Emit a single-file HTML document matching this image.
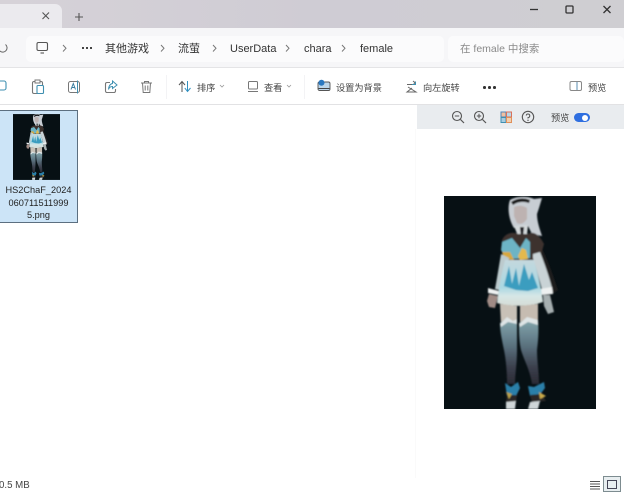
<!DOCTYPE html>
<html><head><meta charset="utf-8"><style>
html,body{margin:0;padding:0}
body{width:624px;height:492px;overflow:hidden;background:#fff}
#w{width:624px;height:492px;position:relative;overflow:hidden;background:#fff;font-family:"Liberation Sans","Noto Sans CJK SC",sans-serif;color:#333;filter:blur(.35px)}
.a{position:absolute;white-space:nowrap}
svg{position:absolute;overflow:visible}
.t{font-size:9.2px;line-height:14px;color:#444}
.b{font-size:11px;line-height:14px;color:#333}
</style></head><body><div id="w">
<svg width="0" height="0" style="position:absolute"><defs>
<linearGradient id="leg" x1="0" y1="0" x2="0" y2="1"><stop offset="0" stop-color="#86aab0"/><stop offset=".4" stop-color="#5c7481"/><stop offset=".75" stop-color="#3b3f4c"/><stop offset="1" stop-color="#2a2a34"/></linearGradient>
<linearGradient id="skirt" x1="0" y1="0" x2="0" y2="1"><stop offset="0" stop-color="#c4d8de"/><stop offset=".6" stop-color="#a9d8e2"/><stop offset=".78" stop-color="#d6e6e6"/><stop offset="1" stop-color="#d5dcd6"/></linearGradient>
<filter id="bl" x="-10%" y="-10%" width="120%" height="120%"><feGaussianBlur stdDeviation=".8"/></filter>
<symbol id="fig" viewBox="0 0 152 213">
<rect width="152" height="213" fill="#071014"/>
<g filter="url(#bl)">
<path d="M90 40 C100 52 108 76 114 94 L108 98 C100 76 92 58 86 48Z" fill="#1c1b1c"/>
<path d="M66 4 C72 0 84 0 90 3 L98 2 L95 12 L93 18 C93 26 96 34 98 40 L88 38 L84 30 L70 32 C65 24 63 12 66 4Z" fill="#c8cdd3"/>
<path d="M67 6 Q76 0 86 4 L85 7 Q76 4 69 9Z" fill="#141519"/>
<path d="M70 11 Q77 8 83 12 L83 23 Q78 30 73 27 L70 20Z" fill="#bdb2b1"/>
<path d="M70 30 L84 29 L83 39 L74 40Z" fill="#d3d8da"/><path d="M76 31 L80 31 L79 42 L77 42Z" fill="#16191e"/>
<path d="M58 44 C62 36 70 36 74 38 L84 38 C90 34 96 40 100 48 L96 62 L86 66 L62 64 L57 54Z" fill="#3d332f"/>
<path d="M58 46 L68 42 L76 52 L82 42 L86 46 L86 62 L62 63 L57 54Z" fill="#6db4c5"/>
<path d="M58 56 L66 56 L70 64 L60 63Z" fill="#d7a83d"/><path d="M78 52 L74 60 L76 64 L84 63 L82 54Z" fill="#e3b94e"/>
<path d="M89 58 L96 56 C100 66 105 80 108 92 L98 94 C95 82 92 72 89 62Z" fill="#c9d3d6"/>
<path d="M57 58 C55 70 53 82 51 93 L59 95 C62 86 64 74 65 62Z" fill="#bccacd"/>
<path d="M44 92 L55 95 L54 99 L44 97Z" fill="#eef1f1"/><path d="M96 93 L108 91 L109 98 L97 99Z" fill="#eef1f1"/>
<path d="M45 98 L54 100 L51 112 L45 111 L43 105Z" fill="#a08b85"/>
<path d="M99 99 L106 99 L110 116 L104 118 L100 110Z" fill="#a6afb0"/>
<path d="M61 64 L90 64 C94 78 98 96 99 106 C86 111 66 111 53 107 C55 90 58 76 61 64Z" fill="url(#skirt)"/>
<path d="M60 90 L65 70 L68 88 L72 72 L75 90 L80 68 L85 84 L88 76 L94 92 L84 95 L72 94Z" fill="#3b9dbf"/>
<path d="M56 108 L73 110 L73 128 L57 128Z" fill="#c8c1b7"/>
<path d="M76 110 L94 108 L94 130 L76 128Z" fill="#c6bcb1"/>
<path d="M56 127 L63 122 L69 125 L73 124 L73 154 C73 168 71 178 71 188 L63 188 C63 176 62 164 60 154 C58 144 56 136 56 127Z" fill="url(#leg)"/>
<path d="M75 127 L83 122 L94 124 C95 136 94 146 93 154 C93 166 95 176 95 188 L88 188 C86 174 80 164 77 154 C75 144 75 136 75 127Z" fill="url(#leg)"/>
<path d="M56 128 L63 121 L69 125 L73 123 L73 128 L64 126 L57 131Z" fill="#dfe5e6"/><path d="M75 128 L83 121 L94 124 L94 129 L84 126 L76 131Z" fill="#dfe5e6"/>
<path d="M61 187 L67 191 L74 186 L76 192 L72 200 L63 200Z" fill="#2b7fa8"/>
<path d="M84 190 L90 191 L100 186 L101 192 L95 200 L86 200Z" fill="#2b7fa8"/>
<path d="M63 199 L73 199 L72 206 L62 206Z" fill="#2c2825"/><path d="M86 199 L97 198 L102 205 L88 206Z" fill="#2c2825"/>
<path d="M62 196 L68 198 L65 203Z" fill="#b9a04c"/><path d="M95 196 L102 200 L96 203Z" fill="#c9a94a"/>
<path d="M62 206 L72 205 L71 213 L62 213Z" fill="#cfd6d8"/><path d="M86 206 L96 205 L94 213 L84 213Z" fill="#cfd6d8"/>
</g>
</symbol>
</defs></svg>

<!-- title bar -->
<div class="a" style="left:0;top:0;width:624px;height:28px;background:linear-gradient(90deg,#d6d2d8,#cfccd4 50%,#cfced2)"></div>
<div class="a" style="left:0;top:4px;width:62px;height:24px;background:#ebeaee;border-radius:0 7px 0 0"></div>
<svg style="left:41px;top:11px" width="10" height="10"><path d="M1.500 1.500L8 8M8 1.500L1.500 8" stroke="#555" stroke-width="1.100" fill="none"/></svg>
<svg style="left:74px;top:12px" width="10" height="10"><path d="M5 1V9M1 5H9" stroke="#555" stroke-width="1.100" fill="none"/></svg>
<svg style="left:530px;top:4px" width="90" height="16"><path d="M0 5.500H8" stroke="#333" stroke-width="1.300"/><rect x="36" y="2" width="7" height="7" rx="1" fill="none" stroke="#333" stroke-width="1.300"/><path d="M73.500 2L80.500 9M80.500 2L73.500 9" stroke="#333" stroke-width="1.300"/></svg>

<!-- address bar -->
<div class="a" style="left:0;top:28px;width:624px;height:40px;background:#f6f6f8"></div>
<div class="a" style="left:26px;top:36px;width:418px;height:26px;background:#fbfbfc;border-radius:5px"></div>
<div class="a" style="left:448px;top:36px;width:176px;height:26px;background:#fbfbfc;border-radius:5px"></div>
<svg style="left:0;top:41px" width="12" height="14"><path d="M7 2.500A4.300 4.300 0 1 1 1 3" transform="translate(-1.500 1)" stroke="#666" stroke-width="1" fill="none"/></svg>
<svg style="left:36px;top:41px" width="14" height="14"><rect x="1" y="1.500" width="10.500" height="8" rx="1.500" fill="none" stroke="#555" stroke-width="1.100"/><path d="M4.500 12H8" stroke="#555" stroke-width="1.100"/></svg>
<svg style="left:62px;top:44px" width="6" height="9"><path d="M1 1L4 4.300L1 7.500" stroke="#777" fill="none"/></svg>
<div class="a" style="left:82px;top:47px;width:2px;height:2px;background:#444;box-shadow:4px 0 #444,8px 0 #444"></div>
<div class="a b" style="left:105px;top:42px">其他游戏</div>
<svg style="left:160px;top:44px" width="6" height="9"><path d="M1 1L4 4.300L1 7.500" stroke="#777" fill="none"/></svg>
<div class="a b" style="left:178px;top:42px">流萤</div>
<svg style="left:212px;top:44px" width="6" height="9"><path d="M1 1L4 4.300L1 7.500" stroke="#777" fill="none"/></svg>
<div class="a b" style="left:230px;top:42px">UserData</div>
<svg style="left:285px;top:44px" width="6" height="9"><path d="M1 1L4 4.300L1 7.500" stroke="#777" fill="none"/></svg>
<div class="a b" style="left:304px;top:42px">chara</div>
<svg style="left:341px;top:44px" width="6" height="9"><path d="M1 1L4 4.300L1 7.500" stroke="#777" fill="none"/></svg>
<div class="a b" style="left:360px;top:42px">female</div>
<div class="a b" style="left:460px;top:42px;color:#8a8a8a;font-size:10.500px">在 female 中搜索</div>

<!-- toolbar -->
<div class="a" style="left:0;top:67px;width:624px;height:38px;background:#fff;border-top:1px solid #e4e4e6;border-bottom:1px solid #e2e2e4;box-sizing:border-box"></div>
<svg style="left:0;top:79px" width="8" height="15"><rect x="-3" y="2" width="9" height="9" rx="2" fill="none" stroke="#3f8fb0" stroke-width="1.100"/></svg>
<svg style="left:31px;top:79px" width="16" height="16"><rect x="1.500" y="2.500" width="10" height="12" rx="1.500" fill="none" stroke="#777" stroke-width="1.100"/><rect x="4" y="1" width="5" height="3" fill="#fff" stroke="#777"/><rect x="6" y="6.500" width="6.500" height="8" rx="1" fill="#fff" stroke="#3f8fb0" stroke-width="1.100"/></svg>
<svg style="left:67px;top:79px" width="16" height="16"><rect x="1.500" y="2.500" width="11" height="11" rx="2" fill="none" stroke="#777"/><path d="M4 10.500L6.300 4.500L8.500 10.500M5 8.500H7.600" stroke="#3a7ea0" fill="none"/><path d="M10.500 1.500V14.500" stroke="#3f8fb0"/></svg>
<svg style="left:104px;top:80px" width="15" height="14"><path d="M6 2.500H3A1.500 1.500 0 0 0 1.500 4V11A1.500 1.500 0 0 0 3 12.500H10A1.500 1.500 0 0 0 11.500 11V9" fill="none" stroke="#777" stroke-width="1.100"/><path d="M8.500 1L13 5L8.500 8.500V6.500C6.500 6.500 5 7.500 4.500 9.500C4.500 6.500 6 4 8.500 3.500Z" fill="none" stroke="#3f8fb0"/></svg>
<svg style="left:140px;top:80px" width="13" height="14"><path d="M1 3H12M4.500 3V1.500H8.500V3M2.500 3L3.200 12.500H9.800L10.500 3M5.200 5.500V10.500M7.800 5.500V10.500" fill="none" stroke="#777" stroke-width="1"/></svg>
<div class="a" style="left:166px;top:75px;width:1px;height:24px;background:#f3f3f5"></div>
<svg style="left:178px;top:80px" width="14" height="13"><path d="M4 12V2M1 5L4 1.500L7 5" fill="none" stroke="#555"/><path d="M9.500 1V11M6.800 8L9.500 11.500L12.500 8" fill="none" stroke="#2f8fc0"/></svg>
<div class="a t" style="left:197px;top:81px">排序</div>
<svg style="left:219px;top:84px" width="6" height="5"><path d="M1 1L3 3L5 1" stroke="#999" fill="none" stroke-width=".8"/></svg>
<svg style="left:247px;top:80px" width="12" height="13"><rect x="1.500" y="1.500" width="9" height="7.500" rx="1" fill="none" stroke="#777"/><path d="M1 11.500H11" stroke="#777"/></svg>
<div class="a t" style="left:264px;top:81px">查看</div>
<svg style="left:286px;top:84px" width="6" height="5"><path d="M1 1L3 3L5 1" stroke="#999" fill="none" stroke-width=".8"/></svg>
<div class="a" style="left:304px;top:75px;width:1px;height:24px;background:#f3f3f5"></div>
<svg style="left:317px;top:79px" width="14" height="14"><rect x="1" y="3" width="12" height="8.500" rx="1.500" fill="#bcd6ea" stroke="#555" stroke-width=".9"/><circle cx="4.500" cy="3.800" r="3" fill="#2a78c0"/><path d="M1.500 9.500H12.500" stroke="#444"/></svg>
<div class="a t" style="left:336px;top:81px">设置为背景</div>
<svg style="left:405px;top:80px" width="13" height="14"><path d="M2 4.500H8.500L10 2.500M8 1L10.200 2.800M3 7L11 12H2L7 8" fill="none" stroke="#666"/><path d="M7 4.500H10.500V1.500" fill="none" stroke="#3f8fb0"/></svg>
<div class="a t" style="left:423px;top:81px">向左旋转</div>
<div class="a" style="left:483px;top:86px;width:2.500px;height:2.500px;border-radius:50%;background:#333;box-shadow:5px 0 #333,10px 0 #333"></div>
<svg style="left:569px;top:80px" width="14" height="13"><rect x="1" y="1.500" width="11.500" height="9" rx="1.500" fill="none" stroke="#888"/><path d="M8 2V10" stroke="#5a8cb0"/></svg>
<div class="a t" style="left:588px;top:81px">预览</div>

<!-- preview toolbar -->
<div class="a" style="left:417px;top:105px;width:207px;height:24px;background:#e9ecef"></div>
<div class="a" style="left:415px;top:129px;width:1px;height:349px;background:#fafafa"></div>
<svg style="left:451px;top:110px" width="14" height="14"><circle cx="6" cy="6" r="4.500" fill="none" stroke="#555" stroke-width="1.100"/><path d="M9.500 9.500L13 13" stroke="#555" stroke-width="1.200"/><path d="M3.800 6H8.200" stroke="#555"/></svg>
<svg style="left:473px;top:110px" width="14" height="14"><circle cx="6" cy="6" r="4.500" fill="none" stroke="#555" stroke-width="1.100"/><path d="M9.500 9.500L13 13" stroke="#555" stroke-width="1.200"/><path d="M3.800 6H8.200M6 3.800V8.200" stroke="#555"/></svg>
<svg style="left:500px;top:111px" width="13" height="13"><rect x="1" y="1" width="5" height="5" fill="#f0c0a0" stroke="#4f86b8"/><rect x="6.500" y="1" width="5" height="5" fill="#b8d8e8" stroke="#d9705a"/><rect x="1" y="6.500" width="5" height="5" fill="#a8cce0" stroke="#3f8fb0"/><rect x="6.500" y="6.500" width="5" height="5" fill="#f2d0b0" stroke="#e0905a"/></svg>
<svg style="left:521px;top:110px" width="14" height="14"><circle cx="7" cy="7" r="5.700" fill="none" stroke="#555" stroke-width="1.100"/><path d="M5.200 5.500A1.800 1.800 0 1 1 7 7.600V8.500" fill="none" stroke="#555"/><circle cx="7" cy="10.300" r=".7" fill="#555"/></svg>
<div class="a t" style="left:551px;top:111px">预览</div>
<div class="a" style="left:574px;top:113px;width:16px;height:9px;border-radius:5px;background:#2f6fe0"></div>
<div class="a" style="left:582px;top:114.500px;width:6px;height:6px;border-radius:50%;background:#fff"></div>

<!-- file item -->
<div class="a" style="left:-2px;top:110px;width:80px;height:113px;background:#cce4f7;border:1px solid #5c6f80;box-sizing:border-box"></div>
<svg style="left:13px;top:114px" width="47" height="66"><use href="#fig" width="47" height="66"/></svg>
<div class="a" style="left:0;top:184px;width:77px;text-align:center;font-size:9.200px;line-height:12.500px;color:#222;white-space:normal">HS2ChaF_2024<br>060711511999<br>5.png</div>

<!-- preview image -->
<svg style="left:444px;top:196px" width="152" height="213"><use href="#fig" width="152" height="213"/></svg>

<!-- status -->
<div class="a" style="left:-1px;top:479px;font-size:9.700px;line-height:13px;color:#444">0.5 MB</div>
<svg style="left:590px;top:480px" width="11" height="10"><path d="M0 1.500H10M0 4H10M0 6.500H10M0 9H10" stroke="#555"/></svg>
<div class="a" style="left:603px;top:476px;width:18px;height:16px;background:#e8eef0;border:1px solid #7d8c90;box-sizing:border-box"></div>
<div class="a" style="left:607px;top:480px;width:10px;height:9px;border:1px solid #445;box-sizing:border-box"></div>
</div></body></html>
